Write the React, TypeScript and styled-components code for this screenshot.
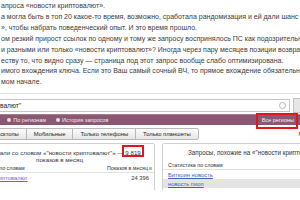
import * as React from 'react';
import styled, { createGlobalStyle } from 'styled-components';

const GlobalStyle = createGlobalStyle`
  html, body {
    margin: 0;
    padding: 0;
    background: #fff;
  }
  body {
    width: 300px;
    height: 200px;
    overflow: hidden;
  }
`;

const Page = styled.div`
  width: 300px;
  height: 200px;
  overflow: hidden;
`;

const Article = styled.div`
  font-family: 'Liberation Sans', Arial, sans-serif;
  font-size: 7px;
  line-height: 10.9px;
  color: #3b3b3b;
  padding-top: 1px;
`;

const Line = styled.div`
  white-space: nowrap;
  padding-left: 1px;
`;

const Shot = styled.div`
  margin-top: 5px;
  height: 96px;
  overflow: hidden;
  font-family: 'Liberation Sans', Arial, sans-serif;
  font-size: 5.8px;
  line-height: 8px;
  color: #333;
  border-top: 1px solid #e2e2e2;
`;

const SearchRow = styled.div`
  display: flex;
  align-items: center;
  gap: 3px;
  padding: 4px 0 1px;
`;

const Input = styled.div`
  flex: 1;
  margin-left: -55px;
  height: 11px;
  display: flex;
  align-items: center;
  justify-content: space-between;
  padding: 0 3px 0 5px;
  border: 1px solid #c4c4c4;
  background: #fff;
  font-size: 6.6px;
  color: #222;
`;

const ClearIcon = styled.span`
  width: 5px;
  height: 5px;
  border-radius: 50%;
  border: 1px solid #b5b5b5;
`;

const SideButton = styled.div`
  width: 6px;
  height: 13px;
  background: #e6e6e6;
  border: 1px solid #c4c4c4;
  border-right: none;
`;

const RegionBar = styled.div`
  height: 10px;
  display: flex;
  align-items: center;
  justify-content: space-between;
  background: #8a5872;
  border-top: 1px solid #a57c90;
  color: #f6eaf0;
  font-size: 5.5px;
  padding-right: 6px;
`;

const RadioList = styled.div`
  display: flex;
  gap: 10px;
  margin-left: -36px;
`;

const Radio = styled.span`
  display: flex;
  align-items: center;
  gap: 2px;
  &::before {
    content: '';
    width: 4px;
    height: 4px;
    border-radius: 50%;
    background: #ecdbe4;
  }
`;

const Marked = styled.span`
  position: relative;
  &::after {
    content: '';
    position: absolute;
    left: -6px;
    right: -4px;
    top: -3px;
    bottom: -5px;
    border: 2px solid #e3151b;
  }
`;

const TabsRow = styled.div`
  display: flex;
  align-items: center;
  gap: 100px;
  padding: 3px 0 3px;
`;

const Tabs = styled.div`
  display: flex;
  flex-shrink: 0;
  margin-left: -39px;
`;

const Tab = styled.span`
  height: 10px;
  display: flex;
  align-items: center;
  padding: 0 7px;
  background: linear-gradient(#fbfbfb, #e6e6e6);
  border: 1px solid #b9b9b9;
  margin-left: -1px;
  color: #222;
  white-space: nowrap;
  &:first-child {
    border-radius: 2px 0 0 2px;
  }
  &:last-child {
    border-radius: 0 2px 2px 0;
  }
`;

const Updated = styled.span`
  flex-shrink: 0;
  color: #222;
  white-space: nowrap;
`;

const Panels = styled.div`
  display: flex;
  gap: 7px;
  align-items: flex-start;
`;

const Panel = styled.div<{ $offset?: number; $width?: number }>`
  flex: ${(p) => (p.$width ? `0 0 ${p.$width}px` : '1')};
  margin-left: ${(p) => p.$offset ?? 0}px;
  margin-right: ${(p) => (p.$width ? 0 : -60)}px;
  border: 1px solid #d0d0d0;
  border-radius: 2px;
  padding-top: 5px;
  min-height: 60px;
  white-space: nowrap;
`;

const Summary = styled.div`
  text-align: center;
  line-height: 7px;
  font-size: 6.2px;
  color: #333;
`;

const Count = styled(Marked)`
  &::after {
    left: -3px;
    right: -3px;
    top: -4px;
    bottom: -1px;
  }
`;

const Caption = styled.div`
  padding: 0 0 0 25px;
  margin: 0 0 5px;
  font-size: 6.3px;
  color: #333;
`;

const TableHead = styled.div`
  display: flex;
  justify-content: space-between;
  align-items: center;
  padding: 0 2px 0 5px;
  margin-top: 2px;
  line-height: 7px;
  border-bottom: 1px solid #e2e2e2;
  font-size: 5.3px;
  color: #333;
`;

const Hint = styled.span`
  display: inline-block;
  width: 3px;
  height: 3px;
  margin-left: 1px;
  background: #9fcf8b;
`;

const Row = styled.div<{ $shade?: boolean }>`
  display: flex;
  justify-content: space-between;
  padding: 1px 5px 0;
  background: ${(p) => (p.$shade ? '#e4e4e4' : 'transparent')};
`;

const Link = styled.a<{ $visited?: boolean }>`
  color: ${(p) => (p.$visited ? '#8e5aa6' : '#3d62b7')};
  text-decoration: underline;
`;

const lines = [
  'апроса «новости криптовалют».',
  'а могла быть в топ 20 какое-то время, возможно, сработала рандомизация и ей дали шанс',
  '», чтобы набрать поведенческий опыт. И это время прошло.',
  'ом резкий прирост ссылок по одному и тому же запросу воспринялось ПС как подозрительное',
  'и разными или только «новости криптовалют»? Иногда через пару месяцев позиции возвращаются',
  'еству то, что видно сразу —  страница под этот запрос вообще слабо оптимизирована.',
  'имого вхождения ключа. Если это Ваш самый сочный ВЧ, то прямое вхождение обязательно',
  'мом начале.',
];

export default function App() {
  return (
    <Page>
      <GlobalStyle />
      <Article>
        {lines.map((text, i) => (
          <Line key={i}>{text}</Line>
        ))}
      </Article>
      <Shot>
        <SearchRow>
          <Input>
            <span>"новости криптовалют"</span>
            <ClearIcon />
          </Input>
          <SideButton />
        </SearchRow>
        <RegionBar>
          <RadioList>
            <Radio>По словам</Radio>
            <Radio>По регионам</Radio>
            <Radio>История запросов</Radio>
          </RadioList>
          <Marked>Все регионы</Marked>
        </RegionBar>
        <TabsRow>
          <Tabs>
            <Tab>Все</Tab>
            <Tab>Десктопы</Tab>
            <Tab>Мобильные</Tab>
            <Tab>Только телефоны</Tab>
            <Tab>Только планшеты</Tab>
          </Tabs>
          <Updated>Последнее обновление: 15.02.2018</Updated>
        </TabsRow>
        <Panels>
          <Panel $offset={-36} $width={189}>
            <Summary>
              Что искали со словом «"новости криптовалют"» — <Count>9 819</Count>
              <br />
              показов в месяц
            </Summary>
            <TableHead>
              <span>Статистика по словам</span>
              <span>
                Показов в месяц
                <Hint />
              </span>
            </TableHead>
            <Row>
              <Link $visited>новости криптовалют</Link>
              <span>24 396</span>
            </Row>
          </Panel>
          <Panel>
            <Caption>Запросы, похожие на «"новости криптовалют"»</Caption>
            <TableHead>
              <span>Статистика по словам</span>
            </TableHead>
            <Row>
              <Link>Биткоин новость</Link>
            </Row>
            <Row $shade>
              <Link>новость пиоп</Link>
            </Row>
          </Panel>
        </Panels>
      </Shot>
    </Page>
  );
}
